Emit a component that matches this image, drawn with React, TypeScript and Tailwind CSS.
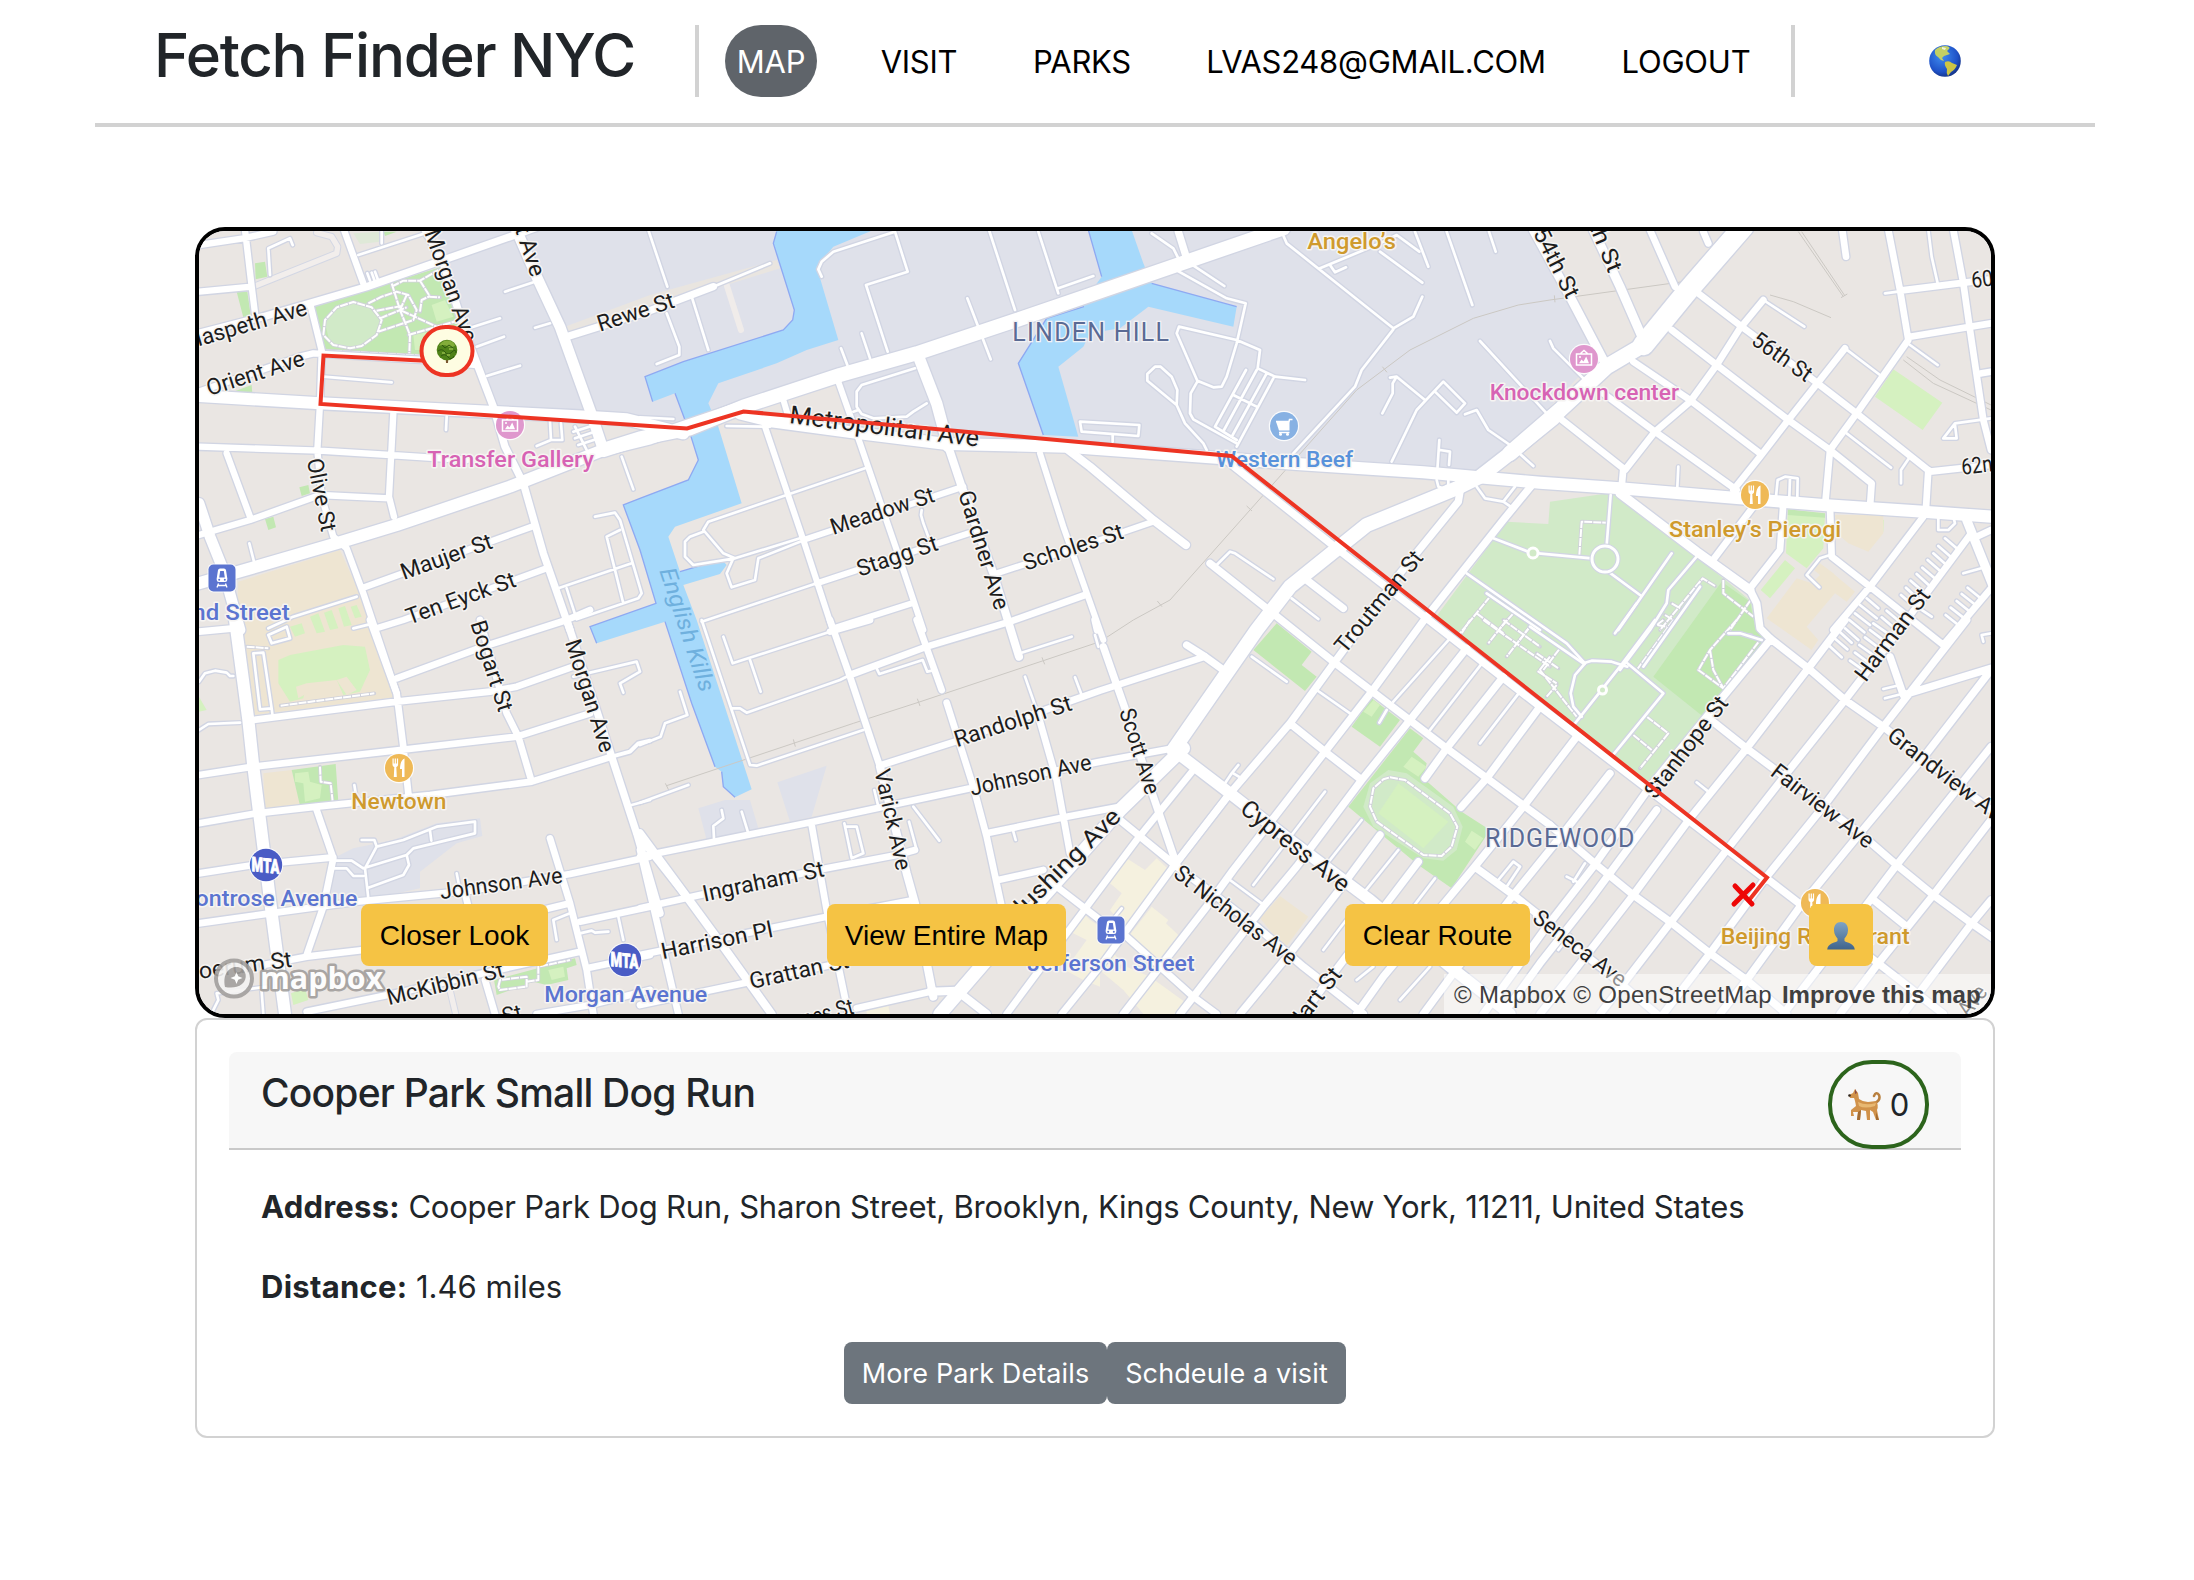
import React from "react";

type Tile = "A" | "B" | "C" | "D" | "E" | "F" | "G" | "H";

/* The map is drawn in eight sheets, each at three units per pixel. */
const sheet: Record<Tile, string> = {
  A: "translate(190 220) scale(0.33333)",
  B: "translate(640 220) scale(0.33333)",
  C: "translate(1090 220) scale(0.33333)",
  D: "translate(1540 220) scale(0.33333)",
  E: "translate(190 620) scale(0.33333)",
  F: "translate(640 620) scale(0.33333)",
  G: "translate(1090 620) scale(0.33333)",
  H: "translate(1540 620) scale(0.33333)",
};

const areas: [Tile, string, string][] = [
  ["A", "#dfe1ea", "M735 30 925 590 1380 620 1650 570 1940 490 1990 590 2280 650 2700 680 3300 715 3870 770 4050 590 4235 400 4150 240 4040 30Z"],
  ["A", "#e9e5e0", "M1125 320 1380 225 1760 120 1770 145 1400 260 1130 350Z"],
  ["A", "#c2e8b2", "M365 262 755 140 845 380 845 410 405 390Z"],
  ["A", "#d1eac8", "M405 310 430 265 480 248 540 265 570 300 555 345 520 375 480 385 420 370Z"],
  ["A", "#d5f1c0", "M725 255 765 240 790 290 740 305Z M670 345 720 335 700 390 675 390Z"],
  ["A", "#c2e8b2", "M195 130 225 125 232 170 197 178Z M140 215 172 215 182 285 162 300Z M118 520 185 495 187 520Z M328 802 355 795 360 820 335 828Z M225 897 250 890 258 922 235 930Z M580 35 620 35 585 48Z"],
  ["A", "#dfe9d8", "M490 40 575 35 570 65 510 72Z"],
  ["A", "#eee5d2", "M145 1085 450 990 545 1200 630 1430 190 1485 140 1200Z"],
  ["A", "#d5f1c0", "M300 1220 335 1210 345 1240 315 1250Z M360 1190 385 1180 405 1235 380 1240Z M402 1178 425 1170 445 1225 420 1230Z M445 1165 465 1158 485 1215 462 1220Z M482 1160 500 1155 515 1190 495 1195Z"],
  ["E", "#d5f1c0", "M300 105 460 75 525 80 540 150 510 215 460 225 440 180 350 190 340 235 300 245 265 190 265 120Z"],
  ["E", "#eee5d2", "M318 200 350 190 360 215 325 235Z M440 180 470 170 500 210 470 225Z"],
  ["E", "#d5f1c0", "M27 230 50 270 27 275Z M303 1120 345 1105 355 1140 310 1155Z"],
  ["E", "#eee5d2", "M220 460 305 450 330 555 225 570Z"],
  ["E", "#c2e8b2", "M305 450 437 432 445 545 330 557Z M912 1080 1155 1015 1160 1035 1130 1045 1135 1080 1070 1095 1030 1085 920 1125Z"],
  ["E", "#d5f1c0", "M315 460 355 455 360 485 395 495 390 535 345 545 340 490 315 485Z M1075 1050 1120 1040 1125 1070 1085 1080Z"],
  ["E", "#dfe1ea", "M430 715 490 685 610 660 740 610 870 595 877 648 800 670 690 755 690 805 530 840 425 820Z"],
  ["F", "#dfe1ea", "M175 565 255 540 330 540 355 625 200 660Z M412 487 560 437 515 590 450 605Z"],
  ["F", "#f5f1df", "M680 1165 745 1158 750 1182 680 1182Z M1330 880 1380 930 1380 1100 1330 1080 1275 1050 1340 960 1280 930Z"],
  ["G", "#f5f1df", "M110 715 165 750 200 715 232 745 110 925 90 905 60 870 95 820 60 790Z M185 860 235 900 228 910 265 945 210 1030 115 950Z M0 900 60 940 70 1000 100 1030 40 1060 0 1020Z M40 1060 110 1040 180 1070 290 1150 260 1182 160 1182 100 1110Z"],
  ["G", "#eee5d2", "M570 828 655 890 585 985 510 895Z"],
  ["G", "#c2e8b2", "M560 10 665 95 635 135 680 170 645 213 490 90Z M845 235 930 300 870 380 785 320Z M960 325 1000 355 970 395 1010 430 1000 475 1115 575 1200 630 1085 805 985 735 870 640 775 560Z"],
  ["G", "#d1eac8", "M895 450 950 460 1090 560 1118 620 1100 690 1060 722 1000 715 850 620 820 560 840 490Z"],
  ["G", "#d5f1c0", "M925 490 1075 605 1000 685 865 580Z M965 410 1010 440 985 470 940 440Z M1145 632 1180 655 1155 690 1125 665Z M850 240 870 255 845 290 820 275Z"],
  ["C", "#d1eac8", "M1250 905 1375 912 1380 845 1565 818 1900 1075 1985 1145 2010 1260 1910 1410 1680 1690 1350 1435 1035 1195Z"],
  ["D", "#c2e8b2", "M545 1085 630 1145 645 1220 690 1260 560 1410 490 1490 340 1370Z"],
  ["D", "#d5f1c0", "M743 885 855 885 850 985 800 1045 738 1000Z M735 1020 765 1045 690 1135 662 1110Z M1060 448 1207 548 1148 630 1005 530Z M1007 897 1032 900 1030 935 1007 935Z"],
  ["D", "#c2e8b2", "M743 868 855 880 855 893 743 885Z"],
  ["D", "#eee5d2", "M885 885 1030 885 1030 940 985 995 925 970 890 940Z M840 1030 880 1060 885 1065 945 1115 920 1145 885 1120 800 1220 835 1260 815 1290 680 1195 770 1075 815 1090 840 1065 815 1045Z"],
];

const waters: [Tile, string][] = [
  ["B", "M410 30 400 70 463 270 458 300 430 330 130 425 15 470 38 545 105 520 150 640 175 720 145 780 0 835 -50 855 0 990 48 1150 -150 1220 -130 1270 75 1205 155 1450 225 1640 245 1655 250 1700 285 1732 335 1708 300 1600 170 1200 130 1095 240 1062 260 1035 245 1018 120 1055 85 950 105 920 305 850 235 620 205 550 235 490 410 430 500 390 595 360 530 140 580 80 700 30Z"],
  ["C", "M-5 30 35 170 -20 245 -20 260 -130 295 -215 430 -140 645 -35 650 -95 440 -20 380 0 340 90 325 175 260 430 320 440 260 185 190 160 130 125 30Z"],
];

const shores: [Tile, string][] = [
  ["B", "M410 35 400 70 463 270 458 300 430 330 130 425 15 470 38 545 M105 520 135 600 M150 640 175 720 145 780 0 835 -50 855 0 990 48 1150 -150 1220 -130 1270 M75 1205 155 1450 225 1640 M245 1655 250 1700 285 1732 M245 1018 120 1055"],
  ["C", "M-5 30 35 170 M-20 245 -20 260 -130 295 -215 430 -140 645 M185 190 440 260"],
];

const roads: [Tile, number, string][] = [
  // Service lanes
  ["A", 8, "M240 165 235 85 300 55 308 75 M505 105 720 35 M575 30 575 70 M770 590 768 630 M400 470 605 487 M945 215 1035 185 M820 330 930 295 M860 380 942 350 M890 468 990 437 M1035 323 1080 310 M1080 605 1083 660 1117 660 1113 610 M1040 678 1083 660 M1155 620 1190 690 M1150 635 1205 618 M1155 655 1212 636 M1165 675 1218 658 M1295 710 1330 808 M1215 890 1275 878 1290 900 1355 1120 1345 1135 1160 1198 M1300 1150 1250 950 1290 930 M1105 1105 1325 1030 M1130 1105 1160 1198 M178 970 192 1025 M235 1225 310 1190 500 1130 M532 160 540 182 M545 158 553 180 M555 155 563 177"],
  ["B", 8, "M25 30 82 200 M155 230 205 390 M80 280 118 380 118 405 50 432 M220 200 390 130 M545 170 535 148 545 125 580 95 765 35 803 155 678 195 743 395 M665 340 690 415 M603 385 622 435 M982 235 1052 418 M1047 30 1125 270 M1195 35 1255 220 M1255 205 1360 168 M825 445 665 495 650 515 650 560 665 582 700 595 800 590 820 575 860 550 M640 575 655 570 M260 618 390 620 M0 592 100 597 M20 635 60 632 M675 745 205 905 190 930 250 1000 285 1015 160 1035 135 1010 135 965 150 950 190 935 M285 1015 480 955 M480 965 355 1015 345 1080 275 1102 260 1060 280 1015 M185 1205 530 1090 M845 870 843 885 850 910 865 950 M1320 605 1498 615 1495 648 1325 635Z M1418 645 1418 665"],
  ["C", 8, "M185 40 250 85 265 115 M240 140 410 235 467 250 440 370 410 470 395 500 370 502 322 482 260 340 267 320 440 360 510 390 503 445 555 470 645 480 M300 130 403 198 M322 485 302 520 300 580 310 598 440 670 M350 690 340 670 285 610 260 555 262 510 245 470 212 440 195 440 172 462 172 482 260 555 M468 450 375 620 440 660 M500 450 402 630 M530 460 428 645 M550 475 440 680 M430 525 500 560 M575 35 590 70 910 325 970 290 997 230 M910 328 815 450 795 500 610 700 M690 145 870 70 920 45 988 95 M870 95 997 188 M720 135 735 157 768 142 M975 35 1015 140 M1070 35 1147 255 M1197 35 1217 95 M1170 363 1370 580 M905 725 980 570 1060 485 1125 550 1100 578 1035 515 M900 473 920 470 1005 540 M877 580 908 520 908 490 920 470 M1125 583 1160 570 1195 630 1260 675 1330 738 M1048 660 1042 750 M1050 690 1080 695 1077 735 M1160 800 1185 835 1240 845 1275 800 M1240 845 1262 860 M605 1135 685 1197 M380 1035 420 995 435 1000 550 1077 M1040 780 1045 800 1060 805 1075 795 1075 780 M1210 955 1315 995 M1345 1000 1505 1015 M1130 1060 1430 1270 1485 1330"],
  ["D", 8, "M30 363 40 385 130 475 M670 240 793 320 M915 385 1020 465 M1165 30 1175 110 1193 190 M1035 220 1080 214 M1110 375 1193 435 M920 640 1053 743 M1110 710 1083 750 1083 790 M1353 595 1245 610 1210 655 1250 655 1245 615 M415 740 412 800 M708 830 713 780 735 770 773 775 772 830 M750 775 748 830 M870 1005 840 1015 800 1065 838 1102 M1195 885 1195 930 1225 930 1245 910 1240 890 M1270 1060 1340 1040 M212 825 200 975 M205 1055 300 1125 M235 1230 395 1000 M470 1010 385 1110 380 1150 330 1230 240 1350 M310 1340 480 1100 M1215 955 1250 985 M1195 978 1232 1010 M1180 1000 1216 1032 M1163 1020 1200 1052 M1147 1043 1184 1075 M1130 1062 1166 1095 M1112 1082 1150 1115 M1098 1103 1134 1136 M1083 1125 1118 1155 M1283 1103 1320 1133 M1265 1122 1303 1152 M1250 1143 1287 1173 M1232 1163 1270 1193 M1217 1185 1255 1215 M980 1135 1015 1165 M960 1155 1010 1195 M945 1180 990 1215 M928 1200 973 1237 M915 1225 955 1260 M1060 1150 1105 1190 M1040 1172 1085 1210 M1025 1192 1070 1230 M1130 1160 1175 1190 M0 1230 -160 1120"],
  ["E", 8, "M1150 170 1340 125 1350 155 1290 190 1300 218 M490 25 550 10 M493 495 497 520 M515 660 553 660 560 680 525 745 535 835 M430 722 485 722 520 745 650 705 670 685 855 640 855 605 740 620 640 660 560 680 M720 632 724 662 M430 745 470 745 490 768 520 768 M535 803 640 765 657 735 650 705 M800 760 808 800 M1100 960 1090 900 1140 880 M1170 940 1205 932 1215 938 1255 935 M1285 890 1300 960 M1380 540 1325 555 M235 45 290 20 300 55 245 70Z M190 100 220 98 245 265 210 268Z M245 265 248 290 M27 185 45 160 75 152 110 158 120 168 130 168 M27 330 55 312 150 308 M70 1170 85 1140 80 1120 230 1100 M215 1115 220 1182"],
  ["F", 8, "M250 50 278 130 570 35 M330 120 362 215 M185 0 330 435 350 437 670 330 M275 265 300 265 320 278 600 180 630 165 M710 145 718 162 848 120 862 155 885 150 M1140 100 1295 50 M1155 170 1190 270 M1305 172 1325 225 M613 610 635 715 670 700 650 620 620 620 M703 510 715 560 M820 560 898 662 M1120 635 1127 660 M830 690 807 605 M120 215 142 285 75 310 62 350 0 375 M0 548 145 495 M245 570 250 595 220 618 222 655 M305 575 325 640"],
  ["G", 8, "M1080 55 910 245 M1180 125 1020 330 M1290 215 1170 370 M705 515 490 795 M815 600 720 720 M925 690 820 820 M1035 775 970 860 M890 270 868 308 M680 210 780 280 M485 110 590 185 M780 885 700 990 M850 1040 800 1080 M1020 1040 930 1140 M1225 780 1270 725 1290 740 1250 800 M420 780 515 850 M95 865 75 890 M445 435 425 460 405 490 M430 460 455 475 M15 45 25 80"],
  ["H", 8, "M470 487 505 515 M80 770 110 785 M135 730 100 785 M55 990 90 945 M1030 207 1080 195 M1035 235 1085 222 M1353 40 1325 45 1330 65 M893 30 935 68 M880 52 922 88 M865 75 905 112 M1000 10 1050 45 M990 30 1040 68 M975 52 1025 90 M958 75 1010 112 M945 98 995 135 M930 122 980 158 M-30 20 130 130 155 122 215 125 262 140 M262 130 370 220 215 410 M345 0 240 140 105 310 M135 130 105 165 92 220 100 260 125 290 M225 40 290 -50 M565 40 600 40 665 60"],
  // Streets
  ["A", 19, "M27 75 160 55 250 35 M27 215 185 200 M165 30 185 200 195 280 M462 30 520 190 M360 250 397 400 M610 580 597 830 612 890 M110 700 180 890 M27 945 60 935 180 900 390 825 597 835 M515 1105 1025 920 M560 1225 640 1200 1070 1045 M27 680 390 692 600 705 830 720 M27 515 330 410 370 400 700 420 860 435 M395 400 390 550 382 690 395 830 430 950 470 985 520 1120 620 1420"],
  ["A", 22, "M27 340 220 290 360 250 530 200 760 120 960 50 1040 22 M700 20 760 130 830 350 910 560 945 680 1000 790 1060 1000 1140 1230 M1130 350 1380 272 1570 200"],
  ["A", 32, "M975 20 1040 170 1110 320 1200 570 1240 690 M27 850 60 950 100 1050 150 1230"],
  ["B", 18, "M595 485 660 670 770 990 850 1230 M430 540 445 590 M375 620 490 960 575 1220 M490 960 970 800 M530 1090 985 940 M1070 1060 1380 960 1540 905 M580 1225 815 1150 M1200 700 1270 920 1390 1260"],
  ["B", 24, "M925 680 965 800 1060 1060 1137 1310 M1285 690 1350 740 1540 900 1638 975"],
  ["B", 34, "M832 400 890 550 925 680"],
  ["C", 22, "M265 35 290 115 M420 730 740 985 1010 1195 1350 1460 2030 1980 M1110 815 1105 845 930 1060 735 1325 M1330 790 1240 900 1010 1190 845 1415 705 1595 430 1950 350 2060 100 2382 M650 1080 760 1165 M360 1030 530 1165 730 1325 1070 1585 1380 1815"],
  ["D", 20, "M330 30 405 200 M490 35 505 70 M475 220 605 320 820 480 950 580 1170 755 1353 735 M1165 750 1157 880 M395 330 530 435 745 600 870 690 995 790 990 860 M280 425 450 540 660 700 M190 520 345 635 590 810 M60 595 250 745 245 800 M670 240 600 325 530 435 450 545 345 635 255 750 M915 385 745 600 660 710 580 810 M1045 30 1080 210 1105 360 950 580 870 690 855 860 M1240 30 1270 190 1290 330 1330 600 1353 690 M1080 212 1353 178 M1110 350 1353 310 M1325 460 1353 455 M907 30 918 110 M730 850 720 990 630 1105 M870 860 875 1010 990 1100 1210 1275 M1150 890 990 1100 880 1230 M640 860 515 1025 M1353 930 1310 950 M1290 945 1100 1200 M1353 1105 1210 1275"],
  ["D", 27, "M-20 30 90 230 190 420 M160 30 240 200 310 360 M240 820 470 995 630 1110 M1280 900 1360 1100"],
  ["D", 22, "M630 1110 650 1150 660 1225 690 1255"],
  ["E", 20, "M27 35 130 25 M540 0 620 220 640 380 655 520 M870 0 950 280 985 350 1025 485 M620 175 880 80 1130 0 1200 -30 M190 300 620 245 900 215 980 200 1150 140 M27 465 190 440 630 390 980 350 1200 280 M27 610 200 580 380 560 720 525 1025 485 1265 410 M27 760 190 735 430 712 M27 910 240 880 500 845 840 812 1140 762 1380 710 M380 570 430 715 400 860 350 1005 M220 1035 350 1010 520 990 830 925 1140 850 M350 1175 640 1115 900 1055 1170 995 M1190 1045 1380 1005 M1170 905 1380 860 M1080 655 1140 850 1190 1050 1210 1182 M1040 1182 1200 1155 1380 1110 M885 1080 915 1182 M825 820 835 860"],
  ["E", 12, "M1265 410 1320 395 1345 370 1380 362"],
  ["E", 22, "M1130 0 1200 210 1265 410 1340 640 1410 880 M1340 640 1490 830"],
  ["E", 36, "M135 0 175 300 190 440 210 600 245 880 285 1182"],
  ["F", 20, "M570 0 630 170 720 440 M570 35 690 0 M830 0 905 210 M920 248 1000 500 1040 650 1085 860 M630 165 860 80 1110 5 1335 -75 M725 435 945 365 1300 240 1380 212 1695 110 M1190 270 1250 480 1290 700 M0 710 520 605 990 505 1380 425 1600 385 M1040 640 1280 590 1440 560 M1075 780 1210 750 M0 865 180 825 560 745 770 705 825 690 M0 1005 560 890 820 840 M0 1155 310 1090 620 1025 M0 690 40 860 115 1182 M515 615 560 870 625 1182 M650 1165 870 1115 M1100 1182 1250 980 1490 660 1660 450 M1265 1182 1380 1040 1600 740 1770 520 M1250 800 1380 900 1460 950 1660 1130 1730 1182"],
  ["F", 24, "M0 640 140 830 250 980 395 1182 M720 440 800 760 825 850 880 1130 M870 1115 950 1112 1040 1182"],
  ["F", 40, "M1630 385 1440 570 1200 840 1040 1020 900 1182"],
  ["G", 22, "M735 125 600 310 420 520 250 740 M1130 85 960 300 815 480 620 740 520 860 270 1182 M1240 170 1070 385 1005 475 M1350 260 1190 475 1113 562 M1460 350 1300 560 1150 745 880 1070 800 1182 M870 645 740 820 600 1000 450 1182 M985 725 700 1100 640 1182 M1560 460 1420 640 1270 825 1090 1060 1000 1182 M1700 570 1500 840 1350 1030 1240 1182 M600 310 705 395 815 480 M90 600 255 735 500 920 640 1040 820 1182 M15 0 22 30 M40 80 110 280 190 530 260 735 M290 75 345 110 400 150 M1160 745 1270 825 1340 880"],
  ["G", 34, "M250 390 420 520 600 660 840 840 1080 1040 1260 1182"],
  ["H", 22, "M690 60 500 290 330 500 160 740 20 920 -170 1182 M915 0 805 145 620 385 450 595 280 825 105 1050 0 1182 M1100 0 915 240 740 460 560 690 390 910 180 1182 M1280 0 1030 320 850 560 680 770 510 1000 370 1182 M1353 150 1160 400 960 640 780 860 620 1080 540 1182 M1353 380 1070 735 870 1000 730 1182 M1353 600 1180 825 1015 1030 900 1182 M1353 840 1295 910 1090 1182 M500 290 620 385 960 640 1070 735 1180 825 1295 910 1360 955 M690 55 805 145 915 240 1030 320 1170 430 1360 575 M680 775 790 860 1015 1030 1210 1182 M30 615 170 735 280 825 390 905 510 1000 620 1080 740 1182 M-10 890 230 1080 350 1182 M995 835 1100 920 M1050 110 1090 225 1353 145"],
  // Avenues
  ["A", 36, "M27 528 390 550 1190 590 1310 598 1480 640 M27 1090 130 1060 440 970 620 915 960 800 1240 690 1380 655 1660 560"],
  ["B", 42, "M-110 690 0 655 150 625 310 560 600 465 830 400 1130 300 1350 225 1640 125 1930 25"],
  ["B", 36, "M300 580 400 605 660 640 920 672 1280 680 1750 715 1970 732 2350 757 2700 788 2940 805 3300 835 3550 855 3850 875 4055 890"],
  ["C", 42, "M1390 595 1260 700 1170 770 1100 805 830 915 600 1100 500 1230 250 1590"],
  ["D", 62, "M610 20 445 210 310 375"],
  ["D", 46, "M310 375 200 440 60 570 -90 700"],
];

const paths: [Tile, string][] = [
  ["A", "M400 345 405 300 440 262 490 246 545 262 575 300 560 345 515 378 480 385 430 375 400 345 M535 250 575 230 620 215 655 225 680 270 670 300 565 335 M605 190 630 270 660 345 658 400 M570 295 650 262 M560 272 635 258 M650 225 630 270 740 320 M605 200 640 182 690 182 745 150 M690 182 720 230 750 232 M690 275 695 240 720 228 M655 345 810 300 M405 392 700 408"],
  ["C", "M1200 1130 1110 1240 M1160 1180 1240 1240 M1270 1180 1230 1225 M1320 1220 1250 1310 M1240 1200 1350 1280"],
  ["D", "M118 1005 125 905 200 908 M525 1098 488 1075 360 1230 M550 1080 550 1120 640 1190 M632 1140 570 1230 M395 1150 420 1165 M375 1185 400 1200"],
  ["E", "M272 257 553 220 M390 440 392 485 422 490 428 545 M925 1100 930 1080 1010 1070 1010 1100 930 1110Z M1010 1085 1045 1080 1045 1040 1140 1020 M170 80 235 85"],
  ["G", "M900 472 945 480 1080 580 1102 620 1085 680 1055 708 1000 705 860 605 840 560 850 505 880 478Z M1140 0 1115 40 M1180 0 1250 50 1380 140 M1250 0 1195 70 M1320 20 1285 65 M1380 110 1345 155 1400 190"],
  ["H", "M0 150 110 290 M20 230 50 195 M320 290 385 340 300 445 M280 345 335 390 M-10 100 55 145 M10 150 60 85 M370 0 350 15 380 20 M400 0 290 150 M590 0 510 90 475 150 550 205 660 60 M510 90 520 150 550 205 M570 40 635 45 M680 70 560 210"],
];

const rails: [Tile, string][] = [
  ["F", "M80 497 640 310 835 247 1210 122 1380 65 1480 0 1590 -60 1830 -330 2150 -690 2310 -810 2500 -905 2635 -945 2730 -960 3130 -1015 3205 -1015 M76 490 86 510 M460 358 466 380 M832 236 840 258 M1206 112 1214 133"],
  ["C", "M470 858 486 873 M877 440 891 457 M202 1143 216 1160"],
  ["D", "M775 35 910 230 M785 35 915 228 M690 225 760 245 873 293 M1090 420 1180 490 1353 570 M1100 410 1200 480 1353 555 M43 226 45 247 M433 175 435 196 M485 174 487 195 M903 233 922 222"],
];

type Label = [Tile, string, number, number, number, number, string?, number?];

const INK = "#1d1d1d";
const labels: Label[] = [
  ["A", "Maspeth Ave", -14, 391, 356, 283],
  ["A", "Orient Ave", 58, 528, 348, 435],
  ["A", "Olive St", 350, 720, 394, 938],
  ["A", "Morgan Ave", 703, 38, 820, 370],
  ["A", "t Ave", 974, 26, 1024, 174],
  ["A", "Rewe St", 1230, 335, 1458, 261],
  ["A", "Maujer St", 641, 1080, 912, 983],
  ["A", "Ten Eyck St", 658, 1214, 982, 1098],
  ["B", "Metropolitan Ave", 446, 609, 1014, 680, INK, 75],
  ["B", "Meadow St", 580, 945, 888, 844],
  ["B", "Stagg St", 659, 1070, 898, 989],
  ["B", "Gardner Ave", 954, 820, 1065, 1174],
  ["B", "Scholes St", 1158, 1052, 1455, 954],
  ["C", "Troutman St", 765, 1304, 1003, 1015],
  ["D", "54th St", -22, 38, 80, 240],
  ["D", "th St", 146, 16, 206, 162],
  ["D", "56th St", 630, 370, 797, 488],
  ["D", "60th", 1297, 204, 1412, 190],
  ["D", "62nd", 1267, 764, 1390, 750],
  ["E", "Bogart St", 841, 10, 926, 279],
  ["E", "Morgan Ave", 1125, 67, 1232, 402],
  ["E", "Johnson Ave", 753, 838, 1120, 788],
  ["E", "Boerum St", -14, 1082, 308, 1040],
  ["E", "McKibbin St", 596, 1156, 945, 1070],
  ["E", "St", 942, 1212, 1000, 1198],
  ["F", "Varick Ave", 703, 453, 770, 754],
  ["F", "Randolph St", 951, 382, 1300, 269],
  ["F", "Johnson Ave", 995, 527, 1358, 448],
  ["F", "Ingraham St", 193, 845, 556, 768],
  ["F", "Harrison Pl", 68, 1018, 402, 950],
  ["F", "Grattan St", 334, 1107, 630, 1042],
  ["F", "Thames St", 382, 1250, 645, 1180],
  ["F", "Flushing Ave", 1120, 920, 1447, 594, INK, 72],
  ["G", "Scott Ave", 87, 274, 168, 528],
  ["G", "Cypress Ave", 446, 574, 756, 820, INK, 72],
  ["G", "St Nicholas Ave", 247, 768, 600, 1039],
  ["G", "Hart St", 622, 1238, 758, 1064],
  ["H", "Harman St", 977, 189, 1174, -74],
  ["H", "Stanhope St", 346, 540, 568, 250],
  ["H", "Grandview Ave", 1037, 355, 1390, 626],
  ["H", "Fairview Ave", 688, 464, 980, 688],
  ["H", "Seneca Ave", -26, 902, 238, 1104],
  ["H", "Ave", 1285, 1195, 1345, 1118],
];

const places: Label[] = [
  ["A", "Grand Street", -105, 1199, 299, 1199, "#5b74d0"],
  ["A", "Transfer Gallery", 712, 741, 1212, 741, "#d763b4"],
  ["C", "Western Beef", 378, 741, 789, 741, "#5892db"],
  ["C", "Angelo’s", 652, 87, 918, 87, "#cf9a2d"],
  ["C", "Knockdown center", 1199, 541, 1767, 541, "#d763b4"],
  ["D", "Stanley’s Pierogi", 387, 950, 904, 950, "#cf9a2d"],
  ["E", "Newtown", 484, 568, 769, 568, "#cf9a2d"],
  ["E", "Montrose Avenue", -44, 858, 502, 858, "#5b74d0"],
  ["E", "Morgan Avenue", 1063, 1146, 1552, 1146, "#5b74d0"],
  ["F", "Jefferson Street", 1162, 1053, 1664, 1053, "#5b74d0"],
  ["H", "Beijing Restaurant", 542, 973, 1109, 973, "#cf9a2d"],
];

function MapLabel({ item, weight = 400 }: { item: Label; weight?: number }) {
  const [tile, text, x1, y1, x2, y2, color = INK, size = 68] = item;
  const length = Math.hypot(x2 - x1, y2 - y1);
  const angle = (Math.atan2(y2 - y1, x2 - x1) * 180) / Math.PI;
  return (
    <g transform={sheet[tile]}>
      <text
        transform={`translate(${x1} ${y1}) rotate(${angle})`}
        textLength={length}
        lengthAdjust="spacingAndGlyphs"
        fontSize={size}
        fontWeight={weight}
        fill={color}
        stroke="#f6f4f2"
        strokeWidth="9"
        strokeLinejoin="round"
        style={{ paintOrder: "stroke" }}
      >
        {text}
      </text>
    </g>
  );
}

function Poi({ x, y, color, children }: { x: number; y: number; color: string; children: React.ReactNode }) {
  return (
    <g transform={`translate(${x} ${y})`}>
      <circle r="15.2" fill="#fff" opacity="0.85" />
      <circle r="14" fill={color} />
      {children}
    </g>
  );
}

const Picture = ({ x, y }: { x: number; y: number }) => (
  <Poi x={x} y={y} color="#df97cd">
    <path d="M-7.5 -5h15v11h-15z M-3.5 -5.500 0 -8.500 3.500 -5.500" fill="none" stroke="#fff" strokeWidth="1.5" />
    <path d="M-5 4.200-2.500 0.500-0.500 2.500 2.200-2.500 5 4.200z" fill="#fff" />
    <circle cx="-4" cy="-2" r="1" fill="#fff" />
  </Poi>
);

const Food = ({ x, y }: { x: number; y: number }) => (
  <Poi x={x} y={y} color="#efb956">
    <path d="M-6.500-9.500h1.200v5h1v-5h1.200v5h1v-5h1.200v6c0 1.500-1 2.200-1.800 2.500l.5 10h-3l.5-10c-.8-.3-1.800-1-1.800-2.500zM5.500-9.500v18.500h-2.500v-8h-2c0-5 1.500-9.500 4.500-10.500z" fill="#fff" />
  </Poi>
);

const Mta = ({ x, y }: { x: number; y: number }) => (
  <g transform={`translate(${x} ${y})`}>
    <circle r="17.200" fill="#fff" opacity="0.85" />
    <circle r="16.200" fill="#4a5cc5" />
    <text
      transform="skewY(6)"
      x="-14.500"
      y="7.500"
      fontSize="20"
      fontWeight="900"
      fill="#fff"
      stroke="#fff"
      strokeWidth="0.800"
      textLength="28"
      lengthAdjust="spacingAndGlyphs"
    >
      MTA
    </text>
  </g>
);

const Train = ({ x, y }: { x: number; y: number }) => (
  <g transform={`translate(${x} ${y})`}>
    <rect x="-14.500" y="-14.500" width="29" height="29" rx="6" fill="#fff" opacity="0.8" />
    <rect x="-13.500" y="-13.500" width="27" height="27" rx="5" fill="#5b74d0" />
    <path d="M-2-9.500h4q1.500 0 2 1.500l1.300 8.500q.3 3.500-2.300 3.500h-6q-2.600 0-2.300-3.500L-4-8q.5-1.500 2-1.500z" fill="#fff" />
    <path d="M-1.800-7h3.600l1 6.500h-5.600z" fill="#5b74d0" />
    <circle cx="-2.800" cy="1.800" r="1" fill="#5b74d0" />
    <circle cx="2.800" cy="1.800" r="1" fill="#5b74d0" />
    <path d="M-5 9.500-3.500 5.500M5 9.500 3.500 5.500M-4.500 7.500h9" stroke="#fff" strokeWidth="1.300" />
  </g>
);

function CityMap() {
  return (
    <svg
      viewBox="199 231 1792 783"
      width="1792"
      height="783"
      className="block"
      fontFamily="Roboto, 'Open Sans', sans-serif"
      fill="none"
    >
      <rect x="199" y="231" width="1792" height="783" fill="#eae6e3" />
      {areas.map(([t, fill, d], i) => (
        <path key={i} transform={sheet[t]} d={d} fill={fill} />
      ))}
      {waters.map(([t, d], i) => (
        <path key={i} transform={sheet[t]} d={d} fill="#a6d9fb" />
      ))}
      {shores.map(([t, d], i) => (
        <path key={i} transform={sheet[t]} d={d} stroke="#8ea9f2" strokeWidth="4" />
      ))}
      <g stroke="#cbc8c3" strokeWidth="3">
        {rails.map(([t, d], i) => (
          <path key={i} transform={sheet[t]} d={d} />
        ))}
      </g>
      <g strokeLinejoin="round" strokeLinecap="round">
        <path transform={sheet.B} d="M260 195 303 330" stroke="#f0ecea" strokeWidth="18" />
        <path transform={sheet.A} d="M195 198 440 100 443 80 425 50 380 38" stroke="#d3d7e4" strokeWidth="22" />
        <path transform={sheet.A} d="M195 198 440 100 443 80 425 50 380 38" stroke="#f2eeec" strokeWidth="16" />
        <path transform={sheet.E} d="M780 1110 797 1182" stroke="#d3d7e4" strokeWidth="22" />
        <path transform={sheet.E} d="M780 1110 797 1182" stroke="#f2eeec" strokeWidth="16" />
        {paths.map(([t, d], i) => (
          <path key={i} transform={sheet[t]} d={d} stroke="#d0d1da" strokeWidth="11" />
        ))}
        {paths.map(([t, d], i) => (
          <path key={i} transform={sheet[t]} d={d} stroke="#fff" strokeWidth="6" strokeDasharray="24 3" strokeLinecap="butt" />
        ))}
        {roads.map(([t, w, d], i) => (
          <path key={i} transform={sheet[t]} d={d} stroke="#d1d5e3" strokeWidth={w + 8} />
        ))}
        {roads.map(([t, w, d], i) => (
          <path key={i} transform={sheet[t]} d={d} stroke="#fff" strokeWidth={w} />
        ))}
      </g>
      <circle cx="1605" cy="559" r="13" fill="#d1eac8" stroke="#d1d5e3" strokeWidth="5" />
      <circle cx="1605" cy="559" r="13" stroke="#fff" strokeWidth="3" />
      <circle cx="1533" cy="553" r="5" fill="#d1eac8" stroke="#fff" strokeWidth="3" />
      <circle cx="1602.500" cy="690" r="4" fill="#d1eac8" stroke="#fff" strokeWidth="3" />

      <g transform={sheet.B}>
        <text
          transform="translate(58 1052) rotate(71.500)"
          textLength="388"
          lengthAdjust="spacingAndGlyphs"
          fontSize="70"
          fontStyle="italic"
          fill="#6fb0de"
        >
          English Kills
        </text>
      </g>
      {labels.map((item, i) => (
        <MapLabel key={i} item={item} />
      ))}
      <g transform={sheet.B} fontSize="75" fill="#5a6a94" stroke="#f2f2f5" strokeWidth="8" style={{ paintOrder: "stroke" }}>
        <text x="1117" y="364" textLength="470">LINDEN HILL</text>
        <text x="2535" y="1882" textLength="448">RIDGEWOOD</text>
      </g>

      <Picture x={510} y={425} />
      <Picture x={1584} y={359} />
      <Poi x={1284} y={426} color="#87b1e3">
        <path d="M-8-4.500H5L5.500-6.500H8.500" stroke="#fff" strokeWidth="1.500" />
        <path d="M-8-4.500H5.500V4.500H-5z" fill="#fff" />
        <path d="M-5 6.500H5.500" stroke="#fff" strokeWidth="1.500" />
        <circle cx="-3.500" cy="8.200" r="1.500" fill="#fff" />
        <circle cx="3.500" cy="8.200" r="1.500" fill="#fff" />
      </Poi>
      <Food x={1755} y={495} />
      <Food x={399} y={768} />
      <Food x={1815} y={903} />
      <Mta x={266} y={865} />
      <Mta x={625} y={960} />
      <Train x={222} y={578} />
      <Train x={1111} y={930} />
      {places.map((item, i) => (
        <MapLabel key={i} item={item} weight={500} />
      ))}

      <path
        d="M430 361 323.500 355.500 320.500 404 687 428.500 743.500 411.500 1231.500 456 1767 877.500 1750 899"
        stroke="#ed3423"
        strokeWidth="4"
      />
      <path d="M1735 886 1752 904M1753 885 1734 904" stroke="#ed0606" strokeWidth="5" strokeLinecap="round" />
      <rect x="421.500" y="327" width="51" height="48" rx="24" fill="#fefde2" stroke="#ed3423" strokeWidth="4" />
      <g transform="translate(447 350)">
        <path d="M-1.500 6h3L1 13h-2z" fill="#7a5630" />
        <circle r="10.300" fill="#4f8219" />
        <path d="M-8-4Q-5-10 1-9.500T8-4Q3-2 0-4T-8-4z" fill="#83ad3a" />
        <path d="M-9 1Q-5-2-2 2T5 2T9 3M-6 6Q-2 3 1 7T7 6M-5-5-2-2 2-5 6-2" stroke="#30590f" strokeWidth="1" />
        <path d="M-5 3h3M2-1h4M0 5h3" stroke="#93b94a" strokeWidth="1.500" />
      </g>

      <g opacity="0.9">
        <circle cx="234" cy="978.500" r="18" fill="#f4f3f2" stroke="#a29f9d" strokeWidth="4" />
        <path d="M225 987C222 973 230 966 238 967C247 969 248 979 242 984C237 988 231 988 225 987z" fill="#a29f9d" />
        <path d="M236.500 972l1.700 4.300 4.300 1.700-4.300 1.700-1.700 4.300-1.700-4.300-4.300-1.700 4.300-1.700z" fill="#fff" />
        <text
          x="260"
          y="988.500"
          fontFamily="'Open Sans', sans-serif"
          fontSize="30"
          fontWeight="700"
          fill="#fff"
          stroke="#a29f9d"
          strokeWidth="5"
          strokeLinejoin="round"
          textLength="123"
          lengthAdjust="spacingAndGlyphs"
          style={{ paintOrder: "stroke" }}
        >
          mapbox
        </text>
      </g>
    </svg>
  );
}

const Globe = () => (
  <svg viewBox="0 0 32 32" width="32" height="32">
    <defs>
      <radialGradient id="sea" cx="0.400" cy="0.350" r="0.700">
        <stop offset="0" stopColor="#3f8df0" />
        <stop offset="0.700" stopColor="#1f52c8" />
        <stop offset="1" stopColor="#14307e" />
      </radialGradient>
    </defs>
    <circle cx="16" cy="16" r="15.800" fill="url(#sea)" />
    <path d="M6 5Q10 1 17 1Q22 2 20 4L18 6 21 9Q18 10 15 11L13 13 15 16 12 15 9 12Q5 10 6 5z" fill="#c3d063" />
    <path d="M13 2l4 1-1 2-3-1z" fill="#eef3e0" />
    <path d="M16 17Q20 15 23 18L28 20Q26 25 22 27L19 31Q17 28 18 24Q15 20 16 17z" fill="#cdc544" />
  </svg>
);

const Dog = () => (
  <svg viewBox="0 0 34 34" width="34" height="34" fill="none">
    <path d="M27 15Q33 12 31 7Q28 3 26 8" stroke="#b9803f" strokeWidth="2.500" strokeLinecap="round" />
    <path d="M1 7 5 5 7 1 10 5 11 11Q15 14 20 14L28 13Q31 17 29 22L31 32H28L25 24 22 22 22 32H19L18 23 13 22 12 32H9L10 24 5 24 6 28H3L3 22 8 18Q7 12 6 10L2 10z" fill="#d1924a" />
    <path d="M10 14Q18 18 28 15L27 18Q17 21 11 18z" fill="#e8b872" />
    <path d="M13 22 12 32H9L10 24zM28 24 31 32H28z" fill="#a36c33" />
    <circle cx="1.500" cy="7.500" r="1.300" fill="#2d241d" />
    <path d="M7 1 9 5 7 6z" fill="#8b4a44" />
  </svg>
);

const Person = () => (
  <svg viewBox="0 0 28 28" width="28" height="28">
    <defs>
      <linearGradient id="bust" x1="0" y1="0" x2="0" y2="1">
        <stop offset="0" stopColor="#7fa3c4" />
        <stop offset="1" stopColor="#3f648c" />
      </linearGradient>
    </defs>
    <path d="M14 0C18.500 0 21.200 3.200 21 8.500C20.800 12.500 19 14.500 17.500 16.500V19C20 21 27 21 27.800 27.500H0.200C1 21 8 21 10.500 19V16.500C9 14.500 7.200 12.500 7 8.500C6.800 3.200 9.500 0 14 0z" fill="url(#bust)" />
  </svg>
);

const mapButton =
  "flex h-[62px] items-center justify-center rounded-lg bg-[#f5c344] pt-[2px] text-[28px] leading-none text-black";
const navLink = "flex items-center justify-center whitespace-nowrap pt-[2px]";

export default function App() {
  return (
    <div className="h-[1580px] w-[2194px] overflow-hidden bg-white font-['Inter',sans-serif] text-[#212529]">
      <header className="ml-[95px] flex h-[127px] w-[2000px] border-b-4 border-[#d2d2d2] pt-[25px]">
        <h1 className="w-[600px] pl-[59px] text-[60px] leading-[60px] font-medium tracking-[-0.022em] whitespace-nowrap">
          Fetch Finder NYC
        </h1>
        <nav className="flex h-[72px] w-[1100px] gap-[52px] border-x-4 border-[#d2d2d2] pl-[26px] text-[31px] tracking-[-0.008em] text-black">
          <a className={`${navLink} w-[92px] rounded-[36px] bg-[#5f646a] text-white`}>MAP</a>
          <a className={`${navLink} w-[100px]`}>VISIT</a>
          <a className={`${navLink} w-[122px]`}>PARKS</a>
          <a className={`${navLink} w-[362px]`}>LVAS248@GMAIL.COM</a>
          <a className={`${navLink} w-[154px]`}>LOGOUT</a>
        </nav>
        <div className="flex h-[72px] flex-1 items-center pl-[134px]">
          <Globe />
        </div>
      </header>

      <main className="mt-[100px] ml-[195px] w-[1800px]">
        <section className="relative h-[791px] overflow-hidden rounded-[30px] border-4 border-black">
          <CityMap />
          <div className="absolute right-0 bottom-0 flex h-[40px] w-[547px] items-center gap-[10px] bg-white/50 pt-[2px] pl-[10px] font-['Liberation_Sans',sans-serif] text-[24px] whitespace-nowrap text-[#404040]">
            <span className="tracking-[0.32px]">© Mapbox © OpenStreetMap</span>
            <span className="font-bold">Improve this map</span>
          </div>
          <div className="absolute top-[673px] left-[162px] flex gap-[279px] font-['Liberation_Sans',sans-serif]">
            <button className={`${mapButton} w-[187px]`}>Closer Look</button>
            <button className={`${mapButton} w-[239px]`}>View Entire Map</button>
            <button className={`${mapButton} w-[185px]`}>Clear Route</button>
            <button className={`${mapButton} w-[64px]`}>
              <Person />
            </button>
          </div>
        </section>

        <section className="h-[420px] rounded-xl border-2 border-[#d2d2d2] px-8 pt-8">
          <div className="flex h-[98px] justify-between rounded-t-lg border-b-2 border-[#c9c9c9] bg-[#f7f7f7] pr-8 pl-8">
            <h2 className="pt-[16px] text-[39px] leading-[50px] font-medium tracking-[-0.020em]">
              Cooper Park Small Dog Run
            </h2>
            <div className="mt-2 flex h-[89px] w-[101px] items-center justify-center gap-2 rounded-[44px] border-4 border-[#2c641c] text-[31px]">
              <Dog />
              <span className="pt-[2px]">0</span>
            </div>
          </div>
          <p className="mt-[33px] pl-8 text-[31px] leading-[48px] tracking-[-0.007em]">
            <strong className="font-bold tracking-[0.008em]">Address:</strong> Cooper Park Dog Run, Sharon Street, Brooklyn, Kings
            County, New York, 11211, United States
          </p>
          <p className="mt-[32px] pl-8 text-[31px] leading-[48px]">
            <strong className="font-bold tracking-[0.008em]">Distance:</strong> 1.46 miles
          </p>
          <div className="mt-[31px] flex justify-center text-[27px] text-white">
            <button className="h-[62px] w-[263px] rounded-lg bg-[#6d757d] pt-[2px] tracking-[0.004em]">More Park Details</button>
            <button className="h-[62px] w-[239px] rounded-lg bg-[#6d757d] pt-[2px] tracking-[0.004em]">Schdeule a visit</button>
          </div>
        </section>
      </main>
    </div>
  );
}
